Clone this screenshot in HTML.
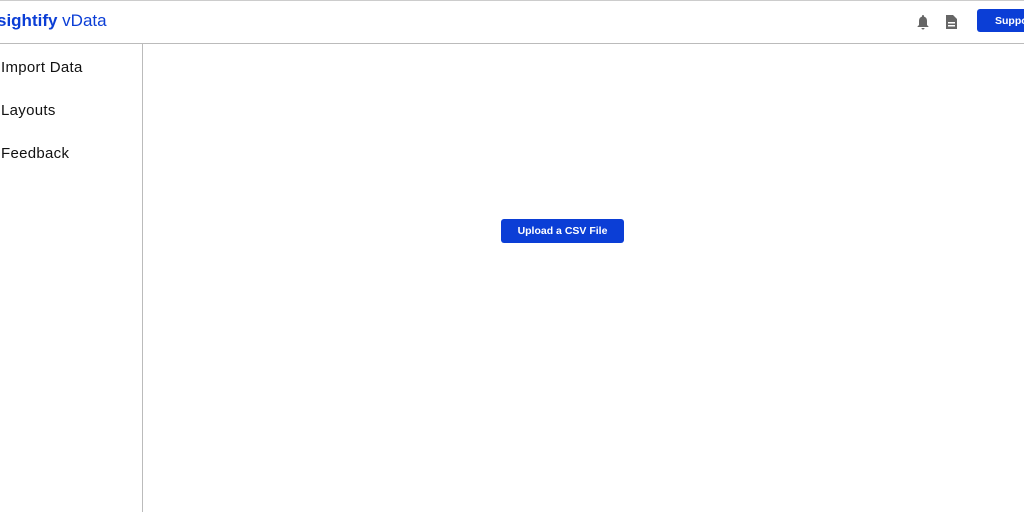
<!DOCTYPE html><html><head><style>
body{margin:0;width:1024px;height:512px;overflow:hidden;background:#fff;font-family:"Liberation Sans",sans-serif;position:relative}
.top{position:absolute;left:0;top:0;width:1024px;height:1px;background:#ccc}
.hdr{position:absolute;left:0;top:43px;width:1024px;height:1px;background:#bbb}
.side{position:absolute;left:142px;top:44px;width:1px;height:468px;background:#bbb}
.logo{position:absolute;left:-3px;top:11px;font-size:17px;color:#0b3ed6;white-space:nowrap}
.nav{position:absolute;left:1px;font-size:15px;color:#111;letter-spacing:0.3px}
.btn{position:absolute;background:#0b3ed6;color:#fff;font-weight:bold;font-size:10.5px;border-radius:3px;box-sizing:border-box}
</style></head><body>
<div class="top"></div><div class="hdr"></div><div class="side"></div>
<div class="logo"><b>sightify</b> vData</div>
<svg style="position:absolute;left:916px;top:14px" width="14" height="16" viewBox="0 0 14 16"><path d="M7 1c-.6 0-1 .4-1 1v.6C4 3.1 3 4.8 3 7v4l-1.5 1.5V13h11v-.5L11 11V7c0-2.2-1-3.9-3-4.4V2c0-.6-.4-1-1-1zM5.5 14a1.5 1.5 0 003 0z" fill="#666"/></svg>
<svg style="position:absolute;left:945px;top:14px" width="13" height="16" viewBox="0 0 13 16"><path d="M1 1h7l4 4v10H1z" fill="#666"/><rect x="3" y="8" width="7" height="1.5" fill="#fff"/><rect x="3" y="11" width="7" height="1.5" fill="#fff"/></svg>
<div class="btn" style="left:977px;top:9px;width:60px;height:23px;padding:6px 0 0 18px">Support</div>
<div class="nav" style="top:59px">Import Data</div>
<div class="nav" style="top:102px">Layouts</div>
<div class="nav" style="top:145px">Feedback</div>
<div class="btn" style="left:501px;top:219px;width:123px;height:24px;text-align:center;line-height:24px">Upload a CSV File</div>
</body></html>
